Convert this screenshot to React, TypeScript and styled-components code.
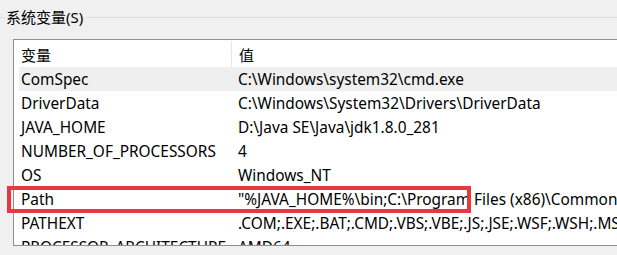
import * as React from 'react';
import styled, { createGlobalStyle } from 'styled-components';

type EnvVar = {
  name: string,
  value: string,
};

const GlobalStyle = createGlobalStyle`
  html, body {
    margin: 0;
    padding: 0;
    background: #f0f0f0;
    overflow: hidden;
  }
  body {
    font-family: "Noto Sans", "Noto Sans CJK SC", sans-serif;
    font-size: 15.4px;
    color: #000;
  }
`;

const Page = styled.div`
  position: relative;
  width: 617px;
  height: 255px;
  overflow: hidden;
`;

const GroupHeader = styled.div`
  display: flex;
  align-items: center;
  height: 34px;
`;

const GroupLine = styled.div<{ $grow?: boolean }>`
  height: 1px;
  background: #dcdcdc;
  width: ${(p) => (p.$grow ? 'auto' : '5px')};
  flex: ${(p) => (p.$grow ? 1 : 'none')};
  margin-top: 1px;
`;

const GroupTitle = styled.div`
  padding: 0 2px 0 1px;
  font-size: 15px;
  line-height: 20px;
  white-space: nowrap;
`;

const ListBox = styled.div`
  margin: 5px 0 0 13px;
  width: 700px;
  height: 207px;
  box-sizing: border-box;
  border: 1px solid #8f8f8f;
  background: #fff;
  overflow: hidden;
`;

const HeaderRow = styled.div`
  display: flex;
  height: 27px;
  align-items: stretch;
`;

const HeaderCell = styled.div<{ $width?: number }>`
  display: flex;
  align-items: center;
  box-sizing: border-box;
  width: ${(p) => (p.$width ? `${p.$width}px` : 'auto')};
  flex: ${(p) => (p.$width ? 'none' : 1)};
  padding-left: 7px;
  font-size: 15px;
  border-right: ${(p) => (p.$width ? '1px solid #e5e5e5' : 'none')};
  margin: 1px 0 0;
`;

const Rows = styled.div`
  margin-left: 5px;
`;

const Row = styled.div<{ $hover?: boolean }>`
  display: flex;
  height: 24px;
  align-items: center;
  background: ${(p) => (p.$hover ? '#efefef' : 'transparent')};
  white-space: nowrap;
`;

const NameCell = styled.div`
  width: 217px;
  padding-left: 2px;
  flex: none;
`;

const ValueCell = styled.div`
  flex: 1;
`;

const Highlight = styled.div`
  position: absolute;
  left: 7px;
  top: 186px;
  width: 464px;
  height: 27px;
  box-sizing: border-box;
  border: 4px solid #e8383d;
  pointer-events: none;
`;

const vars: Array<EnvVar> = [
  { name: 'ComSpec', value: 'C:\\Windows\\system32\\cmd.exe' },
  { name: 'DriverData', value: 'C:\\Windows\\System32\\Drivers\\DriverData' },
  { name: 'JAVA_HOME', value: 'D:\\Java SE\\Java\\jdk1.8.0_281' },
  { name: 'NUMBER_OF_PROCESSORS', value: '4' },
  { name: 'OS', value: 'Windows_NT' },
  { name: 'Path', value: '"%JAVA_HOME%\\bin;C:\\Program Files (x86)\\Common Files\\Oracle\\Java\\javapath' },
  { name: 'PATHEXT', value: '.COM;.EXE;.BAT;.CMD;.VBS;.VBE;.JS;.JSE;.WSF;.WSH;.MSC' },
  { name: 'PROCESSOR_ARCHITECTURE', value: 'AMD64' },
];

const App: React.FC = () => (
  <Page>
    <GlobalStyle />
    <GroupHeader>
      <GroupLine />
      <GroupTitle>系统变量(S)</GroupTitle>
      <GroupLine $grow />
    </GroupHeader>
    <ListBox>
      <HeaderRow>
        <HeaderCell $width={218}>变量</HeaderCell>
        <HeaderCell>值</HeaderCell>
      </HeaderRow>
      <Rows>
        {vars.map((v, i) => (
          <Row key={v.name} $hover={i === 0}>
            <NameCell>{v.name}</NameCell>
            <ValueCell>{v.value}</ValueCell>
          </Row>
        ))}
      </Rows>
    </ListBox>
    <Highlight />
  </Page>
);

export default App;
